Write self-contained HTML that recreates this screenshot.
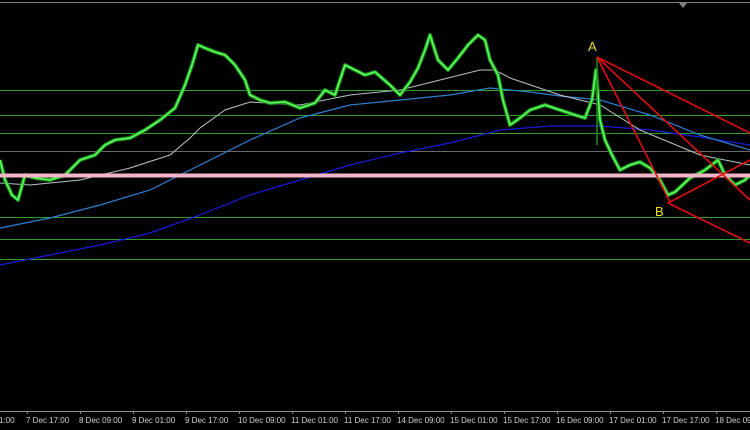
<!DOCTYPE html>
<html><head><meta charset="utf-8"><style>
html,body{margin:0;padding:0;background:#000;width:750px;height:430px;overflow:hidden}
svg{display:block}
text{font-family:"Liberation Sans",sans-serif;font-size:8px;fill:#d0d0d0}
</style></head><body>
<svg width="750" height="430" viewBox="0 0 750 430">
<rect width="750" height="430" fill="#000"/>
<line x1="0" y1="2.5" x2="750" y2="2.5" stroke="#808080"/>
<polygon points="679,3 687,3 683,8" fill="#808080"/>
<g stroke="#2e9e2e" stroke-width="1" shape-rendering="crispEdges">
<line x1="0" y1="90.5" x2="750" y2="90.5"/>
<line x1="0" y1="115.5" x2="750" y2="115.5"/>
<line x1="0" y1="133.5" x2="750" y2="133.5"/>
<line x1="0" y1="217.5" x2="750" y2="217.5"/>
<line x1="0" y1="239.5" x2="750" y2="239.5"/>
<line x1="0" y1="259.5" x2="750" y2="259.5"/>
</g>
<line x1="0" y1="151.5" x2="750" y2="151.5" stroke="#6a6a6a" shape-rendering="crispEdges"/>
<polyline fill="none" stroke="#1a1adc" stroke-width="1.2" points="0,265 50,255 100,245 150,233 200,215 250,195 300,180 350,165 400,153 450,143 500,130 550,126 600,126 650,130 700,137 750,145"/>
<polyline fill="none" stroke="#2f7fd0" stroke-width="1.2" points="0,228 50,218 100,205 150,190 200,165 250,140 300,118 350,105 400,100 450,95 490,88 530,92 560,96 600,100 650,115 700,135 750,150"/>
<polyline fill="none" stroke="#b8c4c8" stroke-width="1" points="0,183 30,185 80,180 130,168 170,155 190,138 200,128 225,110 250,102 300,105 350,95 400,90 440,80 480,70 495,70 510,78 560,95 600,105 640,130 700,155 750,165"/>
<polyline fill="none" stroke="#1f8f1f" stroke-width="4" stroke-linejoin="round" points="0,160 5,180 12,195 18,200 25,175 35,178 50,180 65,175 80,160 95,155 105,145 115,140 130,138 145,130 160,120 175,108 185,85 192,65 198,45 205,48 215,52 225,55 235,65 245,80 250,95 260,100 270,103 285,102 300,108 315,103 325,90 335,95 345,65 355,70 365,75 375,72 390,85 400,95 410,82 418,68 425,50 430,35 438,60 448,70 458,58 468,45 478,35 485,40 490,60 498,75 503,100 510,125 520,118 530,110 545,105 560,110 575,115 585,118 592,100 596,70 600,120 605,140 612,155 620,170 630,165 640,162 650,168 660,180 668,195 675,192 690,178 705,170 718,160 725,175 735,185 745,180 750,175"/>
<polyline fill="none" stroke="#5cff5c" stroke-width="1.6" stroke-linejoin="round" points="0,160 5,180 12,195 18,200 25,175 35,178 50,180 65,175 80,160 95,155 105,145 115,140 130,138 145,130 160,120 175,108 185,85 192,65 198,45 205,48 215,52 225,55 235,65 245,80 250,95 260,100 270,103 285,102 300,108 315,103 325,90 335,95 345,65 355,70 365,75 375,72 390,85 400,95 410,82 418,68 425,50 430,35 438,60 448,70 458,58 468,45 478,35 485,40 490,60 498,75 503,100 510,125 520,118 530,110 545,105 560,110 575,115 585,118 592,100 596,70 600,120 605,140 612,155 620,170 630,165 640,162 650,168 660,180 668,195 675,192 690,178 705,170 718,160 725,175 735,185 745,180 750,175"/>
<line x1="597" y1="57" x2="597" y2="145" stroke="#1f8f1f" stroke-width="1.5"/>
<line x1="0" y1="175.5" x2="750" y2="175.5" stroke="#f4b4c8" stroke-width="4"/>
<g stroke="#e01010" stroke-width="1.6" fill="none">
<line x1="597" y1="57" x2="750" y2="133"/>
<line x1="597" y1="57" x2="750" y2="200"/>
<line x1="597" y1="57" x2="670" y2="202"/>
<line x1="668" y1="203" x2="750" y2="160"/>
<line x1="668" y1="203" x2="750" y2="243"/>
</g>
<text x="588" y="51" style="font-size:13px;fill:#e8e020">A</text>
<text x="655" y="216" style="font-size:13px;fill:#e8e020">B</text>
<line x1="0" y1="411.5" x2="750" y2="411.5" stroke="#909090"/>
<g stroke="#909090">
<line x1="27.5" y1="411" x2="27.5" y2="414"/><line x1="80.5" y1="411" x2="80.5" y2="414"/><line x1="133.5" y1="411" x2="133.5" y2="414"/><line x1="186.5" y1="411" x2="186.5" y2="414"/><line x1="239.5" y1="411" x2="239.5" y2="414"/><line x1="292.5" y1="411" x2="292.5" y2="414"/><line x1="345.5" y1="411" x2="345.5" y2="414"/><line x1="398.5" y1="411" x2="398.5" y2="414"/><line x1="451.5" y1="411" x2="451.5" y2="414"/><line x1="504.5" y1="411" x2="504.5" y2="414"/><line x1="557.5" y1="411" x2="557.5" y2="414"/><line x1="610.5" y1="411" x2="610.5" y2="414"/><line x1="663.5" y1="411" x2="663.5" y2="414"/><line x1="716.5" y1="411" x2="716.5" y2="414"/>
</g>
<text x="-1" y="423">1:00</text>
<text x="26" y="423">7 Dec 17:00</text>
<text x="79" y="423">8 Dec 09:00</text>
<text x="132" y="423">9 Dec 01:00</text>
<text x="185" y="423">9 Dec 17:00</text>
<text x="238" y="423">10 Dec 09:00</text>
<text x="291" y="423">11 Dec 01:00</text>
<text x="344" y="423">11 Dec 17:00</text>
<text x="397" y="423">14 Dec 09:00</text>
<text x="450" y="423">15 Dec 01:00</text>
<text x="503" y="423">15 Dec 17:00</text>
<text x="556" y="423">16 Dec 09:00</text>
<text x="609" y="423">17 Dec 01:00</text>
<text x="662" y="423">17 Dec 17:00</text>
<text x="715" y="423">18 Dec 09:00</text>
</svg>
</body></html>
